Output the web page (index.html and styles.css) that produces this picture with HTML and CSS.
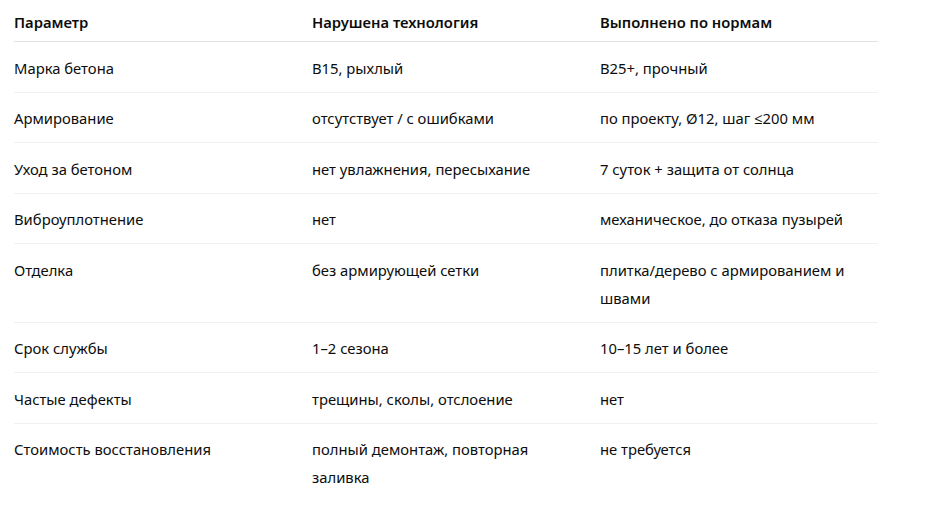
FILE: index.html
```html
<!DOCTYPE html>
<html lang="ru">
<head>
<meta charset="utf-8">
<link rel="stylesheet" href="styles.css">
</head>
<body>
<table class="cmp">
  <colgroup>
    <col class="c1"><col class="c2"><col class="c3">
  </colgroup>
  <thead>
    <tr><th>Параметр</th><th>Нарушена технология</th><th>Выполнено по нормам</th></tr>
  </thead>
  <tbody>
    <tr><td>Марка бетона</td><td>B15, рыхлый</td><td>B25+, прочный</td></tr>
    <tr><td>Армирование</td><td>отсутствует / с ошибками</td><td>по проекту, Ø12, шаг ≤200 мм</td></tr>
    <tr><td>Уход за бетоном</td><td>нет увлажнения, пересыхание</td><td>7 суток + защита от солнца</td></tr>
    <tr><td>Виброуплотнение</td><td>нет</td><td>механическое, до отказа пузырей</td></tr>
    <tr><td>Отделка</td><td>без армирующей сетки</td><td>плитка/дерево с армированием и швами</td></tr>
    <tr><td>Срок службы</td><td>1–2 сезона</td><td>10–15 лет и более</td></tr>
    <tr><td>Частые дефекты</td><td>трещины, сколы, отслоение</td><td>нет</td></tr>
    <tr><td>Стоимость восстановления</td><td>полный демонтаж, повторная заливка</td><td>не требуется</td></tr>
  </tbody>
</table>
</body>
</html>
```

FILE: styles.css
```css
html, body {
  margin: 0;
  background: #ffffff;
}
body {
  padding: 0 0 0 14px;
  font-family: "Noto Sans", "Open Sans", sans-serif;
  font-size: 14.8px;
  color: #0d0d0d;
}
.cmp {
  border-collapse: collapse;
  table-layout: fixed;
  width: 864px;
}
.c1 { width: 298px; }
.c2 { width: 288px; }
.c3 { width: 278px; }
.cmp th, .cmp td {
  text-align: left;
  vertical-align: top;
  line-height: 28px;
  padding: 0 24px 0 0;
}
.cmp th {
  font-weight: 600;
  padding-top: 8px;
  padding-bottom: 5px;
  border-bottom: 1.5px solid #e3e3e3;
}
.cmp td {
  padding-top: 11.5px;
  padding-bottom: 10px;
  border-bottom: 1px solid #f0f0f0;
}
.cmp tbody tr:last-child td {
  border-bottom: none;
}
```
